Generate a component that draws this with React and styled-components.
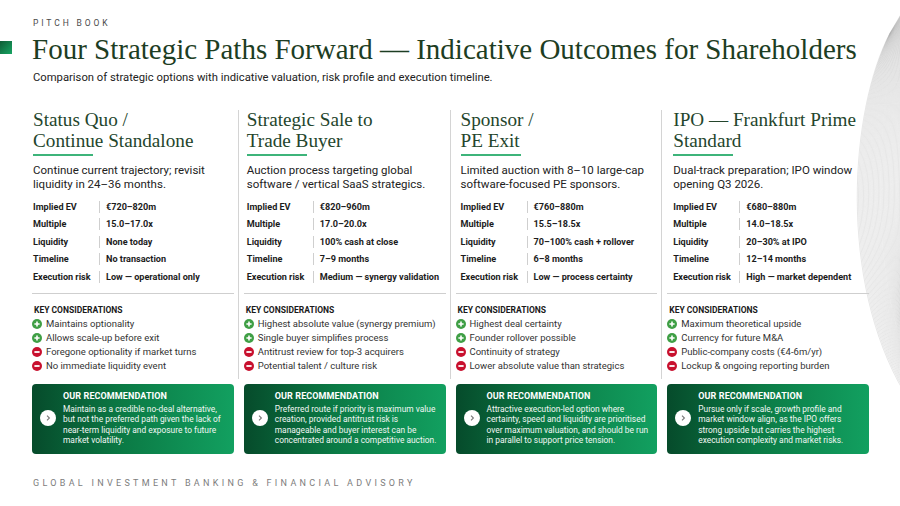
import React from "react";
import styled, { createGlobalStyle } from "styled-components";

const options = [
  {
    title: ["Status Quo /", "Continue Standalone"],
    desc: "Continue current trajectory; revisit liquidity in 24–36 months.",
    rows: [
      ["Implied EV", "€720–820m"],
      ["Multiple", "15.0–17.0x"],
      ["Liquidity", "None today"],
      ["Timeline", "No transaction"],
      ["Execution risk", "Low — operational only"],
    ],
    pros: ["Maintains optionality", "Allows scale-up before exit"],
    cons: ["Foregone optionality if market turns", "No immediate liquidity event"],
    rec: [
      "Maintain as a credible no-deal alternative,",
      "but not the preferred path given the lack of",
      "near-term liquidity and exposure to future",
      "market volatility.",
    ],
  },
  {
    title: ["Strategic Sale to", "Trade Buyer"],
    desc: "Auction process targeting global software / vertical SaaS strategics.",
    rows: [
      ["Implied EV", "€820–960m"],
      ["Multiple", "17.0–20.0x"],
      ["Liquidity", "100% cash at close"],
      ["Timeline", "7–9 months"],
      ["Execution risk", "Medium — synergy validation"],
    ],
    pros: ["Highest absolute value (synergy premium)", "Single buyer simplifies process"],
    cons: ["Antitrust review for top-3 acquirers", "Potential talent / culture risk"],
    rec: [
      "Preferred route if priority is maximum value",
      "creation, provided antitrust risk is",
      "manageable and buyer interest can be",
      "concentrated around a competitive auction.",
    ],
  },
  {
    title: ["Sponsor /", "PE Exit"],
    desc: "Limited auction with 8–10 large-cap software-focused PE sponsors.",
    rows: [
      ["Implied EV", "€760–880m"],
      ["Multiple", "15.5–18.5x"],
      ["Liquidity", "70–100% cash + rollover"],
      ["Timeline", "6–8 months"],
      ["Execution risk", "Low — process certainty"],
    ],
    pros: ["Highest deal certainty", "Founder rollover possible"],
    cons: ["Continuity of strategy", "Lower absolute value than strategics"],
    rec: [
      "Attractive execution-led option where",
      "certainty, speed and liquidity are prioritised",
      "over maximum valuation, and should be run",
      "in parallel to support price tension.",
    ],
  },
  {
    title: ["IPO — Frankfurt Prime", "Standard"],
    desc: "Dual-track preparation; IPO window opening Q3 2026.",
    rows: [
      ["Implied EV", "€680–880m"],
      ["Multiple", "14.0–18.5x"],
      ["Liquidity", "20–30% at IPO"],
      ["Timeline", "12–14 months"],
      ["Execution risk", "High — market dependent"],
    ],
    pros: ["Maximum theoretical upside", "Currency for future M&A"],
    cons: ["Public-company costs (€4-6m/yr)", "Lockup & ongoing reporting burden"],
    rec: [
      "Pursue only if scale, growth profile and",
      "market window align, as the IPO offers",
      "strong upside but carries the highest",
      "execution complexity and market risks.",
    ],
  },
];

const GlobalStyle = createGlobalStyle`
  html, body {
    margin: 0;
    padding: 0;
    background: #ffffff;
  }
  body {
    font-family: Roboto, "Liberation Sans", sans-serif;
    -webkit-font-smoothing: antialiased;
  }
`;

const PlusIcon = () => (
  <svg width="10" height="10" viewBox="0 0 10 10">
    <circle cx="5" cy="5" r="5" fill="#3f9f45" />
    <path d="M5 2.4v5.2M2.4 5h5.2" stroke="#fff" strokeWidth="1.6" />
  </svg>
);

const MinusIcon = () => (
  <svg width="10" height="10" viewBox="0 0 10 10">
    <circle cx="5" cy="5" r="5" fill="#c8102e" />
    <path d="M2.4 5h5.2" stroke="#fff" strokeWidth="1.8" />
  </svg>
);

// faint bundle of curved lines on the right edge
const Waves = () => {
  const lines = [];
  for (let i = 0; i < 36; i++) {
    const x0 = 110 + i * 0.35;
    const y0 = 33 - i * 0.6;
    const c1x = 70 + i * 1.5;
    const c2x = 58 + i * 1.7;
    const y3 = 392 - i * 2.2;
    lines.push(
      <path
        key={i}
        d={`M ${x0} ${y0} C ${c1x} ${110 + i}, ${c2x} ${280 - i * 1.5}, 124 ${y3}`}
        fill="none"
        stroke="#9c9c9c"
        strokeWidth="0.35"
        opacity="0.7"
      />
    );
  }
  return (
    <WaveArt width="120" height="506" viewBox="0 0 120 506">
      {lines}
    </WaveArt>
  );
};

export default function App() {
  return (
    <>
      <GlobalStyle />
      <Page>
        <Waves />
        <Eyebrow>PITCH BOOK</Eyebrow>
        <Title>Four Strategic Paths Forward — Indicative Outcomes for Shareholders</Title>
        <Subtitle>
          Comparison of strategic options with indicative valuation, risk profile and execution timeline.
        </Subtitle>
        <Columns>
          {options.map((opt, i) => (
            <Column key={i}>
              <Body $divider={i > 0}>
                <Inset $pad={[1, 3, 5, 6][i]}>
                  <Heading>
                    {opt.title[0]}
                    <br />
                    {opt.title[1]}
                  </Heading>
                  <Underline />
                  <Desc>{opt.desc}</Desc>
                  <Table>
                    {opt.rows.map(([k, v]) => (
                      <Row key={k}>
                        <Label>{k}</Label>
                        <Value>{v}</Value>
                      </Row>
                    ))}
                  </Table>
                </Inset>
                <Rule />
                <ConsTitle>KEY CONSIDERATIONS</ConsTitle>
                <List>
                  {opt.pros.map((p) => (
                    <Item key={p}>
                      <PlusIcon />
                      <span>{p}</span>
                    </Item>
                  ))}
                  {opt.cons.map((c) => (
                    <Item key={c}>
                      <MinusIcon />
                      <span>{c}</span>
                    </Item>
                  ))}
                </List>
              </Body>
              <RecBox>
                <Chevron>
                  <svg width="8" height="8" viewBox="0 0 8 8">
                    <path d="M3 1.6 5.4 4 3 6.4" fill="none" stroke="#777" strokeWidth="1.1" />
                  </svg>
                </Chevron>
                <RecText>
                  <RecTitle>OUR RECOMMENDATION</RecTitle>
                  <RecBody>
                    {opt.rec.map((line) => (
                      <span key={line}>{line}</span>
                    ))}
                  </RecBody>
                </RecText>
              </RecBox>
            </Column>
          ))}
        </Columns>
        <Footer>GLOBAL INVESTMENT BANKING &amp; FINANCIAL ADVISORY</Footer>
      </Page>
    </>
  );
}

const Page = styled.div`
  position: relative;
  width: 900px;
  height: 506px;
  box-sizing: border-box;
  padding: 17px 31px 0 32px;
  overflow: hidden;
  background: #ffffff;
`;

const WaveArt = styled.svg`
  position: absolute;
  top: 0;
  right: 0;
  pointer-events: none;
`;

const Eyebrow = styled.div`
  font-size: 8.5px;
  line-height: 12px;
  letter-spacing: 2.9px;
  color: #4a4a4a;
  padding-left: 1px;
`;

const Title = styled.h1`
  position: relative;
  margin: 2px 0 0;
  font-family: "Liberation Serif", "DejaVu Serif", serif;
  font-weight: 400;
  font-size: 29px;
  line-height: 36px;
  color: #1d3d23;
  white-space: nowrap;

  &::before {
    content: "";
    position: absolute;
    left: -32px;
    top: 10px;
    width: 12px;
    height: 13px;
    background: linear-gradient(135deg, #0f5c35, #17a563);
  }
`;

const Subtitle = styled.p`
  margin: 3px 0 0;
  font-size: 11.25px;
  line-height: 16px;
  color: #222;
  padding-left: 1px;
`;

const Columns = styled.div`
  display: grid;
  grid-template-columns: repeat(4, 1fr);
  column-gap: 10px;
  margin-top: 23px;
`;

const Column = styled.div`
  display: flex;
  flex-direction: column;
`;

const Body = styled.div`
  position: relative;
  flex: 1;

  &::before {
    content: "";
    display: ${(p) => (p.$divider ? "block" : "none")};
    position: absolute;
    left: -6px;
    top: 1px;
    bottom: -6px;
    width: 1px;
    background: #d4d4d4;
  }
`;

const Inset = styled.div`
  padding-left: ${(p) => p.$pad}px;
`;

const Heading = styled.h2`
  margin: 0;
  font-family: "Liberation Serif", "DejaVu Serif", serif;
  font-weight: 400;
  font-size: 19.2px;
  line-height: 21px;
  color: #24452c;
  white-space: nowrap;
`;

const Underline = styled.div`
  width: 60px;
  height: 2px;
  margin-top: 3px;
  background: #3db47a;
`;

const Desc = styled.p`
  margin: 8px 0 0;
  font-size: 11.5px;
  line-height: 13.5px;
  color: #222;
  padding-right: 8px;
`;

const Table = styled.div`
  margin-top: 7px;
`;

const Row = styled.div`
  display: grid;
  grid-template-columns: 66px 1fr;
  align-items: center;
  height: 17.5px;
  font-size: 9.1px;
  font-weight: 700;
  color: #1c1c1c;
  white-space: nowrap;
`;

const Label = styled.span``;

const Value = styled.span`
  border-left: 1px solid #cfcfcf;
  padding-left: 6px;
  line-height: 12px;
`;

const Rule = styled.div`
  height: 1px;
  margin-top: 7px;
  background: #cfcfcf;
`;

const ConsTitle = styled.div`
  margin-top: 10px;
  padding-left: 2px;
  font-size: 8.5px;
  line-height: 12px;
  font-weight: 700;
  color: #1a1a1a;
`;

const List = styled.ul`
  margin: 1px 0 0;
  padding: 0;
  list-style: none;
`;

const Item = styled.li`
  display: flex;
  align-items: center;
  gap: 4px;
  height: 14px;
  font-size: 9.5px;
  color: #333;
  white-space: nowrap;

  svg {
    flex-shrink: 0;
  }
`;

const RecBox = styled.div`
  display: flex;
  align-items: center;
  gap: 7px;
  height: 70px;
  margin-top: 11px;
  box-sizing: border-box;
  padding: 0 6px 2px 8px;
  border-radius: 4px;
  background: linear-gradient(90deg, #064b2b 0%, #0b7a45 45%, #12a060 100%);
  color: #fff;
`;

const Chevron = styled.div`
  flex-shrink: 0;
  width: 16px;
  height: 16px;
  border-radius: 50%;
  background: #fff;
  display: flex;
  align-items: center;
  justify-content: center;
`;

const RecText = styled.div`
  display: flex;
  flex-direction: column;
`;

const RecTitle = styled.div`
  font-size: 9px;
  line-height: 12px;
  font-weight: 700;
  letter-spacing: 0.1px;
`;

const RecBody = styled.div`
  display: flex;
  flex-direction: column;
  margin-top: 2px;
  font-size: 8.4px;
  line-height: 10.2px;
  white-space: nowrap;
  color: #f1f7f3;
`;

const Footer = styled.div`
  margin-top: 23px;
  padding-left: 1px;
  font-size: 9px;
  line-height: 12px;
  letter-spacing: 3.3px;
  color: #7d7d7d;
`;
